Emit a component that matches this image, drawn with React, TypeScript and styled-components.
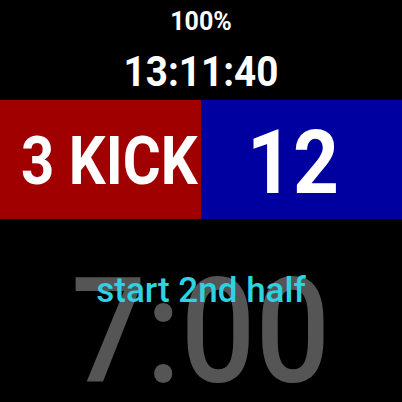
import React from "react";
import styled, { createGlobalStyle } from "styled-components";

const Global = createGlobalStyle`
  html, body { margin: 0; padding: 0; background: #000; }
  body { font-family: Roboto, "Liberation Sans", sans-serif; }
`;

const Screen = styled.div`
  width: 402px;
  height: 402px;
  background: #000;
  display: flex;
  flex-direction: column;
  align-items: stretch;
  overflow: hidden;
  color: #fff;
  & > * { flex-shrink: 0; }
`;

const Battery = styled.div`
  margin-top: 9px;
  font-size: 25px;
  line-height: 25px;
  font-weight: 700;
  text-align: center;
`;

const Clock = styled.div`
  margin-top: 17px;
  font-size: 42px;
  line-height: 42px;
  font-weight: 700;
  text-align: center;
  transform: scaleX(0.92);
`;

const ScoreRow = styled.div`
  margin-top: 7px;
  height: 119px;
  display: grid;
  grid-template-columns: 201px 201px;
`;

const Team = styled.div<{ $bg: string; $shift: number }>`
  background: ${(p) => p.$bg};
  display: flex;
  align-items: center;
  justify-content: center;
  padding-left: ${(p) => Math.max(p.$shift, 0)}px;
  padding-right: ${(p) => Math.max(-p.$shift, 0)}px;
  padding-top: 5px;
`;

const TeamText = styled.span<{ $size: number; $squeeze: number }>`
  display: inline-block;
  font-size: ${(p) => p.$size}px;
  line-height: ${(p) => p.$size}px;
  font-weight: 700;
  white-space: nowrap;
  transform: scaleX(${(p) => p.$squeeze});
`;

const Lower = styled.div`
  display: grid;
  justify-items: center;
  align-items: start;
`;

const Countdown = styled.div`
  grid-area: 1 / 1;
  margin-top: 41px;
  font-size: 146px;
  line-height: 146px;
  font-weight: 500;
  color: #555555;
  transform: scaleX(0.9);
`;

const Message = styled.div`
  grid-area: 1 / 1;
  margin-top: 54px;
  font-size: 35px;
  line-height: 35px;
  font-weight: 500;
  color: #2dd3e3;
  z-index: 1;
`;

export default function App() {
  return (
    <>
      <Global />
      <Screen>
        <Battery>100%</Battery>
        <Clock>13:11:40</Clock>
        <ScoreRow>
          <Team $bg="#a00000" $shift={18}>
            <TeamText $size={66} $squeeze={0.88}>3 KICK</TeamText>
          </Team>
          <Team $bg="#0000a0" $shift={-16}>
            <TeamText $size={89} $squeeze={0.9}>12</TeamText>
          </Team>
        </ScoreRow>
        <Lower>
          <Countdown>7:00</Countdown>
          <Message>start 2nd half</Message>
        </Lower>
      </Screen>
    </>
  );
}
